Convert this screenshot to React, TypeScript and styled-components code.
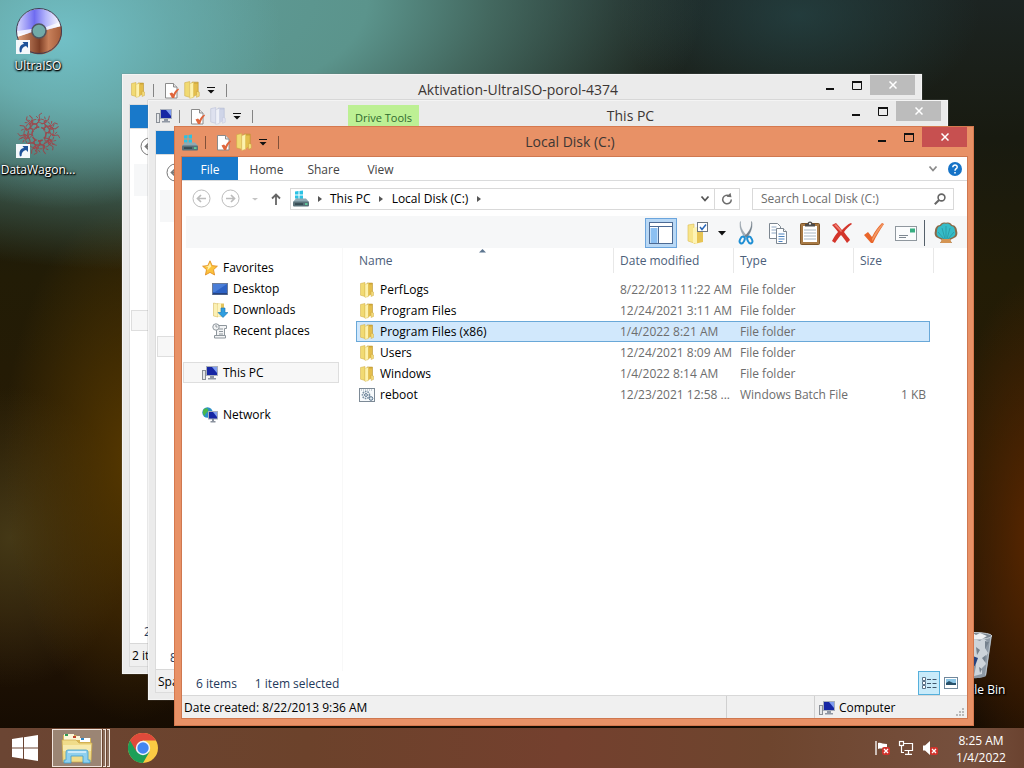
import React from "react";
import styled, { createGlobalStyle, css } from "styled-components";

const GlobalStyle = createGlobalStyle`
  * { box-sizing: border-box; }
  html, body { margin: 0; padding: 0; height: 100%; }
  body {
    font-family: "Open Sans", "Noto Sans", sans-serif;
    font-size: 12px;
    line-height: 16px;
    color: #000;
    overflow: hidden;
  }
  button, input { font: inherit; color: inherit; }
  button { border: 0; padding: 0; background: none; }
  a { color: inherit; text-decoration: none; }
  ul { list-style: none; margin: 0; padding: 0; }
  svg { display: block; flex: none; }
`;

/* ---------- Desktop ---------- */

const Screen = styled.div`
  display: flex;
  flex-direction: column;
  height: 100vh;
  background:
    radial-gradient(ellipse 220px 170px at 6% 5%, rgba(116, 196, 204, 0.9) 0%, rgba(108, 180, 184, 0.6) 50%, rgba(100, 160, 160, 0) 100%),
    radial-gradient(ellipse 560px 270px at 14% 0%, #5f9c98 0%, #5b948c 40%, rgba(74, 116, 106, 0.85) 62%, rgba(50, 66, 48, 0) 100%),
    radial-gradient(ellipse 180px 110px at 78% 2%, rgba(38, 70, 72, 0.7) 0%, rgba(36, 60, 60, 0) 100%),
    radial-gradient(ellipse 130px 260px at 13% 60%, #563800 0%, rgba(76, 48, 0, 0) 100%),
    radial-gradient(ellipse 120px 150px at 1% 70%, rgba(72, 60, 24, 0.9) 0%, rgba(66, 54, 18, 0) 100%),
    radial-gradient(ellipse 90px 260px at 101% 70%, #582600 0%, rgba(80, 34, 0, 0) 100%),
    linear-gradient(180deg, #1c2422 0%, #181a10 18%, #221c06 36%, #261a04 60%, #241505 80%, #160c02 95%);
`;

const Desktop = styled.main`
  position: relative;
  flex: 1;
  min-height: 0;
`;

const Shortcut = styled.button<{ $left?: number; $right?: number; $top: number }>`
  position: absolute;
  top: ${(p) => p.$top}px;
  ${(p) => (p.$left !== undefined ? `left: ${p.$left}px;` : "")}
  ${(p) => (p.$right !== undefined ? `right: ${p.$right}px;` : "")}
  width: 76px;
  display: flex;
  flex-direction: column;
  align-items: center;
  gap: 3px;
  color: #fff;
  white-space: nowrap;
  text-shadow: 1px 1px 1px #000, 0 0 3px #000, 0 1px 2px #000;
`;

/* ---------- Window frame ---------- */

const Frame = styled.section<{ $active?: boolean; $x: number; $y: number }>`
  position: absolute;
  left: ${(p) => p.$x}px;
  top: ${(p) => p.$y}px;
  right: ${(p) => 224 - p.$x}px;
  bottom: ${(p) => 128 - p.$y}px;
  display: flex;
  flex-direction: column;
  padding: 0 6px 7px 7px;
  background: ${(p) => (p.$active ? "#e89166" : "#ebebeb")};
  border: 1px solid ${(p) => (p.$active ? "#d5794f" : "#f4f4f4")};
  box-shadow: ${(p) => (p.$active ? "none" : "0 0 1px #777")};
`;

const TitleBar = styled.header`
  display: flex;
  flex: none;
  height: 30px;
`;

const QuickAccess = styled.div`
  display: flex;
  align-items: center;
  flex: none;
`;

const QuickButton = styled.button<{ $w: number }>`
  display: flex;
  align-items: center;
  justify-content: center;
  width: ${(p) => p.$w}px;
  height: 20px;
`;

const Rule = styled.span`
  width: 1px;
  height: 13px;
  margin: 0 7px;
  background: #00000070;
  flex: none;
`;

const ToolTab = styled.span`
  align-self: stretch;
  width: 71px;
  margin: 4px 0 0 88px;
  display: flex;
  align-items: center;
  justify-content: center;
  background: #bdf094;
  color: #2f6a2f;
  font-size: 11px;
  white-space: nowrap;
`;

const Title = styled.h1<{ $shift?: boolean }>`
  flex: 1;
  min-width: 0;
  margin: 0;
  padding-right: ${(p) => (p.$shift ? 14 : 0)}px;
  font-size: 14px;
  font-weight: 400;
  line-height: 30px;
  text-align: center;
  color: #3c3634;
  white-space: nowrap;
  overflow: hidden;
`;

const Controls = styled.div`
  display: flex;
  flex: none;
  align-items: flex-start;
`;

const ControlButton = styled.button<{ $w: number; $bg?: string }>`
  display: flex;
  align-items: center;
  justify-content: center;
  width: ${(p) => p.$w}px;
  height: 20px;
  background: ${(p) => p.$bg ?? "transparent"};
`;

const Client = styled.div<{ $active?: boolean }>`
  flex: 1;
  min-height: 0;
  display: flex;
  flex-direction: column;
  background: #fff;
  outline: 1px solid ${(p) => (p.$active ? "#cf7850" : "#dcdcdc")};
`;

/* ---------- Ribbon tabs ---------- */

const Tabs = styled.div`
  display: flex;
  flex: none;
  height: 24px;
  border-bottom: 1px solid #dadbdc;
`;

const Tab = styled.button<{ $file?: boolean }>`
  width: ${(p) => (p.$file ? 56 : 57)}px;
  height: 23px;
  padding-top: 2px;
  color: #444;
  ${(p) =>
    p.$file &&
    css`
      background: #1979ca;
      color: #fff;
    `}
`;

const TabsEnd = styled.div`
  display: flex;
  align-items: center;
  gap: 10px;
  margin-left: auto;
  padding-right: 5px;
`;

/* ---------- Address row ---------- */

const AddressRow = styled.div`
  display: flex;
  align-items: center;
  flex: none;
  height: 35px;
  padding: 0 13px 0 10px;
`;

const NavButton = styled.button<{ $w: number }>`
  display: flex;
  align-items: center;
  justify-content: center;
  flex: none;
  width: ${(p) => p.$w}px;
  height: 22px;
`;

const AddressBox = styled.nav`
  display: flex;
  align-items: center;
  flex: 1;
  min-width: 0;
  height: 22px;
  border: 1px solid #d9d9d9;
  padding-left: 2px;
`;

const Crumb = styled.a`
  white-space: nowrap;
`;

const CrumbArrow = styled.span`
  display: flex;
  justify-content: center;
  width: 21px;
`;

const AddressButton = styled.button<{ $line?: boolean }>`
  display: flex;
  align-items: center;
  justify-content: center;
  width: ${(p) => (p.$line ? 25 : 18)}px;
  height: 20px;
  margin-left: ${(p) => (p.$line ? "0" : "auto")};
  border-left: ${(p) => (p.$line ? "1px solid #d9d9d9" : "0")};
`;

const SearchBox = styled.label`
  display: flex;
  align-items: center;
  flex: none;
  width: 202px;
  height: 22px;
  margin-left: 12px;
  padding: 0 7px 0 8px;
  border: 1px solid #d9d9d9;
`;

const SearchInput = styled.input`
  flex: 1;
  min-width: 0;
  padding: 0;
  border: 0;
  outline: 0;
  background: transparent;
  &::placeholder { color: #6d6d6d; opacity: 1; }
`;

/* ---------- Toolbar ---------- */

const Toolbar = styled.div`
  display: flex;
  align-items: flex-end;
  justify-content: flex-end;
  flex: none;
  height: 32px;
  margin-left: 4px;
  padding-right: 5px;
  background: #f6f7f8;
`;

const ToolButton = styled.button<{ $on?: boolean; $narrow?: boolean }>`
  display: flex;
  align-items: center;
  justify-content: center;
  width: ${(p) => (p.$narrow ? 16 : 32)}px;
  height: 30px;
  ${(p) =>
    p.$on &&
    css`
      margin-right: 5px;
      background: #b9d8f5;
      border: 1px solid #6ba5dd;
    `}
`;

const ToolRule = styled.span`
  width: 1px;
  height: 26px;
  margin: 0 5px 2px 2px;
  background: #55606a;
`;

/* ---------- Panes ---------- */

const Panes = styled.div`
  display: flex;
  flex: 1;
  min-height: 0;
`;

const Sidebar = styled.nav`
  flex: none;
  width: 161px;
  padding: 9px 3px 0 1px;
  border-right: 1px solid #f8f8f8;
`;

const NavGroup = styled.ul`
  & + & { margin-top: 21px; }
`;

const NavItem = styled.a<{ $sub?: boolean; $current?: boolean }>`
  display: flex;
  align-items: center;
  gap: 5px;
  height: 21px;
  padding-left: ${(p) => (p.$sub ? 28 : 18)}px;
  border: 1px solid ${(p) => (p.$current ? "#dedede" : "transparent")};
  background: ${(p) => (p.$current ? "#f7f7f7" : "transparent")};
  white-space: nowrap;
`;

const Listing = styled.div`
  flex: 1;
  min-width: 0;
  padding-left: 13px;
`;

const FileTable = styled.table`
  width: 578px;
  table-layout: fixed;
  border-collapse: separate;
  border-spacing: 0;
`;

const HeadCell = styled.th<{ $w: number }>`
  width: ${(p) => p.$w}px;
  padding: 0 0 6px;
  font-weight: 400;
  text-align: left;
`;

const HeadLabel = styled.button<{ $first?: boolean }>`
  position: relative;
  display: flex;
  align-items: center;
  width: 100%;
  height: 25px;
  padding-left: ${(p) => (p.$first ? 3 : 6)}px;
  color: #4c607a;
  border-right: 1px solid #e8e8e8;
`;

const SortMark = styled.span`
  position: absolute;
  top: 0;
  left: calc(50% - 6px);
`;

const FileRow = styled.tr<{ $selected?: boolean }>`
  position: relative;
  z-index: 0;
  ${(p) =>
    p.$selected &&
    css`
      td:first-child::before {
        content: "";
        position: absolute;
        inset: 0 4px 0 0;
        z-index: -1;
        background: #d1e8fc;
        border: 1px solid #69a8d8;
      }
    `}
`;

const Cell = styled.td<{ $right?: boolean }>`
  height: 21px;
  padding: 0 ${(p) => (p.$right ? 8 : 0)}px 0 6px;
  color: #6d6d6d;
  text-align: ${(p) => (p.$right ? "right" : "left")};
  white-space: nowrap;
`;

const NameCell = styled(Cell)`
  padding-left: 3px;
  color: #000;
`;

const FileName = styled.span`
  display: flex;
  align-items: center;
  gap: 5px;
`;

/* ---------- Footer rows ---------- */

const InfoRow = styled.div`
  display: flex;
  align-items: center;
  flex: none;
  height: 24px;
  padding: 0 5px 0 14px;
  gap: 18px;
  color: #1e395b;
  white-space: nowrap;
`;

const InfoText = styled.span`
  padding-top: 2px;
`;

const ViewButtons = styled.div`
  display: flex;
  margin-left: auto;
`;

const ViewButton = styled.button<{ $on?: boolean }>`
  display: flex;
  align-items: center;
  justify-content: center;
  width: 22px;
  height: 24px;
  ${(p) =>
    p.$on &&
    css`
      background: #c9ebfa;
      border: 1px solid #56b0dc;
    `}
`;

const StatusBar = styled.footer`
  display: flex;
  flex: none;
  height: 23px;
  background: #f0f0f0;
  border-top: 1px solid #d8d8d8;
  white-space: nowrap;
`;

const StatusPart = styled.div<{ $w?: number }>`
  ${(p) => (p.$w ? `width: ${p.$w}px; flex: none; border-left: 1px solid #d0d0d0;` : "flex: 1; min-width: 0;")}
  display: flex;
  align-items: center;
  gap: 4px;
  padding-top: 1px;
  padding-left: ${(p) => (p.$w ? 4 : 2)}px;
`;

const Grip = styled.span`
  align-self: flex-end;
  margin: 0 2px 1px auto;
`;

/* ---------- Taskbar ---------- */

const Taskbar = styled.nav`
  position: relative;
  display: flex;
  align-items: center;
  flex: none;
  height: 40px;
  background: linear-gradient(90deg, #6b4533 0%, #6c422b 30%, #74402e 55%, #6e452e 75%, #76503e 95%, #6b4330 100%);
`;

const StartButton = styled.button`
  display: flex;
  align-items: center;
  justify-content: center;
  width: 50px;
  height: 40px;
`;

const TaskStack = styled.div`
  display: flex;
  gap: 1px;
  height: 38px;
  margin-left: 2px;
`;

const TaskButton = styled.button`
  display: flex;
  align-items: center;
  justify-content: center;
  width: 50px;
  height: 38px;
  border: 1px solid #efe3dc;
  background: #9b8574;
`;

const StackEdge = styled.span`
  width: 3px;
  border: 1px solid #efe3dc;
  border-left: 0;
  background: #8a6d5c;
`;

const PinnedButton = styled.button`
  display: flex;
  align-items: center;
  justify-content: center;
  width: 50px;
  height: 40px;
  margin-left: 8px;
`;

const Tray = styled.div`
  display: flex;
  align-items: center;
  gap: 8px;
  margin-left: auto;
`;

const TrayButton = styled.button`
  width: 16px;
  height: 16px;
`;

const Clock = styled.time`
  width: 70px;
  margin-right: 8px;
  padding-top: 2px;
  color: #fff;
  text-align: center;
  line-height: 17px;
`;

/* ---------- Icons ---------- */

const Folder = ({ faded = false, size = 16 }: { faded?: boolean; size?: number }) => (
  <svg width={size} height={size} viewBox="0 0 16 16" opacity={faded ? 0.9 : 1}>
    <path d="M8 1h5.500v10L8 14.500z" fill={faded ? "#c3cae2" : "#d3ab3a"} stroke={faded ? "#a9b2d0" : "#b8902a"} strokeWidth=".5" />
    <path d="M1.500 1.500L6 .5v14l-4.500-1.300z" fill={faded ? "#dde1f0" : "#f1da72"} stroke={faded ? "#b3bad6" : "#cfab42"} strokeWidth=".5" />
    <path d="M6 2.500l3.500-1.500v13.500L6 15.500z" fill={faded ? "#f0f2fa" : "#fdf2ae"} stroke={faded ? "#bcc3da" : "#d8ba50"} strokeWidth=".4" />
    <path d="M9.500 2.500H13v9l-3.500 2.500z" fill={faded ? "#ccd3e8" : "#e4be4c"} />
    <path d="M12 9l2.500 1v3.500L12 14.500z" fill={faded ? "#dfe2f2" : "#f3dc7c"} stroke={faded ? "#bcc2dc" : "#c79f34"} strokeWidth=".4" />
  </svg>
);

const PageCheck = () => (
  <svg width="16" height="17" viewBox="0 0 16 17">
    <path d="M2.500 1.500h8l3.500 3.500v11H2.500z" fill="#fff" stroke="#8b8b8b" />
    <path d="M10.500 1.500V5H14" fill="#e4e4e4" stroke="#8b8b8b" />
    <path d="M6.500 11.500l2.500-1 1.500 1.500c1-2.500 2.500-4.500 5-5.500l.5 1c-2.500 2.500-4 5.500-4.800 8.500H9z" fill="#e0663c" />
  </svg>
);

const Monitor = () => (
  <svg width="16" height="16" viewBox="0 0 16 16">
    <rect x=".5" y="5.500" width="3" height="9" fill="#e4e6e8" stroke="#8a8f96" />
    <rect x="4.500" y="1.500" width="11" height="9" fill="#1626a4" stroke="#a7aebb" />
    <path d="M10 2h5v6z" fill="#7f9df0" />
    <path d="M8 11h4v2h2v1.500H6V13h2z" fill="#9097a3" />
  </svg>
);

const Drive = () => (
  <svg width="16" height="17" viewBox="0 0 16 17">
    <path d="M2 1.500l3.500-.5v3.500H2zM6.500 1L10 .5v4H6.500zM2 5.500h3.500V9L2 8.500zM6.500 5.500H10v4L6.500 9z" fill="#2bc2e4" />
    <path d="M3 8.500h10l3 3.500H0z" fill="#8fa9b2" />
    <rect x="0" y="11.500" width="16" height="5" rx="1" fill="#587078" />
    <rect x="2" y="13.300" width="8" height="1.500" fill="#2f444b" />
    <rect x="12" y="13.300" width="2.500" height="1.500" fill="#5fe0a0" />
  </svg>
);

const Overflow = () => (
  <svg width="8" height="8" viewBox="0 0 8 8">
    <path d="M0 1h8v1H0zM.5 4h7L4 7.500z" fill="#111" />
  </svg>
);

const Back = ({ flip = false, dark = false }: { flip?: boolean; dark?: boolean }) => (
  <svg width="19" height="19" viewBox="0 0 19 19" fill="none" stroke={dark ? "#777" : "#bcbcbc"}>
    <circle cx="9.500" cy="9.500" r="8.500" />
    <path d={flip ? "M5 9.500h8.500M10 6l3.500 3.500L10 13" : "M14 9.500H5.500M9 6L5.500 9.500 9 13"} strokeWidth="1.700" />
  </svg>
);

const Star = () => (
  <svg width="16" height="16" viewBox="0 0 16 16">
    <path d="M8 .8l2.200 4.800 5.200.6-3.900 3.500 1.100 5.300L8 12.400 3.400 15l1.100-5.300L.6 6.200l5.200-.6z" fill="#fbc23c" stroke="#e08a1e" strokeWidth=".8" />
    <path d="M8 3l1.300 3.500-4 4L6 7 3 6.500l3.300-.4z" fill="#fff0a8" />
  </svg>
);

const DesktopIcon = () => (
  <svg width="16" height="16" viewBox="0 0 16 16">
    <rect x=".5" y="2.500" width="15" height="11" fill="#2d62c4" stroke="#6c7c98" />
    <path d="M1 3h14L3 11H1z" fill="#4a7ed8" />
    <rect x="1" y="12" width="14" height="1.500" fill="#27437e" />
  </svg>
);

const Downloads = () => (
  <svg width="16" height="16" viewBox="0 0 16 16">
    <path d="M5 1.500h7v13H5z" fill="#e3c45e" />
    <path d="M1.500 1L6 2v13l-4.500-1z" fill="#fbf0b4" stroke="#d1b04a" strokeWidth=".5" />
    <path d="M6 2l3-1v13l-3 1z" fill="#fdf5c0" />
    <path d="M9 6h4v4.500h3l-5 5-5-5h3z" fill="#2f9ee0" stroke="#1873b4" strokeWidth=".6" />
  </svg>
);

const Recent = () => (
  <svg width="16" height="16" viewBox="0 0 16 16" fill="#f3f4f5" stroke="#8e969c">
    <path d="M5.500 2.500h9v3h-2v9h-8v-8z" />
    <path d="M7 6h4M7 8.500h4M7 11h4M2.500 12.500h11v2.500h-11z" />
    <circle cx="4" cy="4" r="3.200" />
    <path d="M4 2v2h1.500" fill="none" />
  </svg>
);

const NetworkIcon = () => (
  <svg width="16" height="16" viewBox="0 0 16 16">
    <circle cx="5.500" cy="5.500" r="5.200" fill="#2b8fc8" />
    <path d="M2 2c3-2 5 0 4 2S3 6 3 9C1 8 0 5 2 2z" fill="#49b84a" />
    <rect x="6.500" y="4.500" width="9" height="7.500" fill="#1626a4" stroke="#a7aebb" />
    <path d="M11 5h4v5z" fill="#7f9df0" />
    <path d="M10 12h2v2h1.500v1.500h-5V14H10z" fill="#8a919d" />
  </svg>
);

const Batch = () => (
  <svg width="16" height="16" viewBox="0 0 16 16">
    <rect x=".5" y="1.500" width="15" height="13" fill="#f7fafc" stroke="#7d8a96" />
    <path d="M2 3h12" stroke="#9aa8b4" strokeDasharray="1 1" />
    <circle cx="7" cy="8" r="3.500" fill="none" stroke="#7a90a2" strokeWidth="1.600" strokeDasharray="1.600 .9" />
    <circle cx="7" cy="8" r="1.400" fill="#fff" stroke="#54708a" />
    <circle cx="12" cy="11.500" r="1.800" fill="#dfe8ee" stroke="#54708a" />
  </svg>
);

const LayoutIcon = () => (
  <svg width="24" height="22" viewBox="0 0 24 22">
    <rect x=".5" y=".5" width="23" height="21" fill="#fff" stroke="#4c6a94" />
    <path d="M1 4.500h22" stroke="#4c6a94" />
    <path d="M1.500 6h7v15h-7z" fill="#8cc0f2" />
    <path d="M9.500 5v16" stroke="#4c6a94" />
  </svg>
);

const FolderOptions = () => (
  <svg width="22" height="24" viewBox="0 0 22 24">
    <path d="M1 4l6-1v19l-6-2z" fill="#f8e58c" stroke="#dcbc50" strokeWidth=".6" />
    <path d="M6 8h10v13l-9 2z" fill="#e7c454" />
    <path d="M6 7l4-1v17l-4-1z" fill="#fdf3b4" />
    <rect x="10.500" y="1.500" width="10" height="9" fill="#fff" stroke="#6f7780" />
    <path d="M13 6l2 2.500L19 3.500" fill="none" stroke="#2b68b8" strokeWidth="1.500" />
  </svg>
);

const Scissors = () => (
  <svg width="16" height="24" viewBox="0 0 16 24">
    <path d="M2.500.5c-.8 5 2 10 6.500 14.500L7 16.500C3 11.500 1 5 2.500.5z" fill="#a4b0ba" stroke="#7d8b96" strokeWidth=".4" />
    <path d="M13.500.5c.8 5-2 10-6.500 14.500l2 1.500C13 11.500 15 5 13.500.5z" fill="#76848f" stroke="#5d6b76" strokeWidth=".4" />
    <ellipse cx="4.200" cy="19" rx="2.200" ry="3.600" fill="none" stroke="#1f8fd4" strokeWidth="2" transform="rotate(25 4.200 19)" />
    <ellipse cx="11.800" cy="19" rx="2.200" ry="3.600" fill="none" stroke="#1f8fd4" strokeWidth="2" transform="rotate(-25 11.800 19)" />
  </svg>
);

const Copy = () => (
  <svg width="20" height="23" viewBox="0 0 20 23" fill="#fff" stroke="#7d8791">
    <path d="M1.500 1.500h8l3 3v12h-11z" />
    <path d="M3.500 5h5M3.500 8h5M3.500 11h5" stroke="#8fa8c4" />
    <path d="M8.500 6.500h7l3 3v12h-10z" />
    <path d="M15.500 6.500v3h3" />
    <path d="M10.500 12h6M10.500 14.500h6M10.500 17h6M10.500 19.500h4" stroke="#4d82bd" />
  </svg>
);

const Paste = () => (
  <svg width="20" height="24" viewBox="0 0 20 24">
    <rect x=".5" y="2.500" width="19" height="21" rx="1" fill="#a87a45" stroke="#7c552a" />
    <rect x="3" y="5" width="14" height="16" fill="#fff" />
    <path d="M4 9h12M4 12h12M4 15h12M4 18h12" stroke="#a9b8c4" />
    <path d="M5 3h2.500a2.500 2.500 0 015 0H15v2.500H5z" fill="#4b4b4b" />
    <circle cx="10" cy="2.800" r="1" fill="#fff" />
  </svg>
);

const Delete = () => (
  <svg width="22" height="22" viewBox="0 0 22 22">
    <path d="M1 3l4-2c3 3 5 6 6 7 3-3 6-6 9-7l1 1c-3 2-6 5-8 8 2 3 5 6 6 8l-3 3c-2-3-4-6-6-8-2 2-4 5-6 8l-3-2c2-4 4-7 6-9C5 7 3 5 1 3z" fill="#d3352b" />
    <path d="M3 3l2-1 6 7-1 1z" fill="#f07d70" />
  </svg>
);

const BigCheck = () => (
  <svg width="22" height="22" viewBox="0 0 22 22">
    <path d="M1 13l4-3 4 5C12 9 15 5 19 1l2 1c-4 6-8 12-11 19H8z" fill="#e9662b" />
    <path d="M9 17c3-7 7-12 10-15l1.500.5C16 8 13 13 9.500 19z" fill="#f29a66" />
  </svg>
);

const Mail = () => (
  <svg width="22" height="15" viewBox="0 0 22 15">
    <rect x=".5" y=".5" width="21" height="14" fill="#fbfcfd" stroke="#8f979e" />
    <rect x="15" y="2.500" width="5" height="4" fill="#38ae82" />
    <path d="M4 9.500h9M4 11.500h7" stroke="#7d8791" />
  </svg>
);

const Shell = () => (
  <svg width="24" height="22" viewBox="0 0 24 22">
    <path d="M12 .8c3-1 5 .2 6 2.200 3 0 5 3 5 6 1 3 0 6-3 7l-4 2 2 3H6l2-3-4-2c-3-1-4-4-3-7 0-3 2-6 5-6C7 1 9-.2 12 .8z" fill="#8a6a48" />
    <path d="M12 2c2-1 4 0 5 2 3 0 4 3 4 5 1 3 0 5-2 6l-7 3-7-3c-2-1-3-3-2-6 0-2 1-5 4-5 1-2 3-3 5-2z" fill="#36bcc8" />
    <path d="M12 17V4M11 17L8 6M13 17l3-11M10 17L4 10M14 17l6-7" stroke="#25929c" strokeWidth=".7" fill="none" />
    <path d="M8 17h8l1.500 4h-11z" fill="#d49554" />
  </svg>
);

const Help = () => (
  <svg width="14" height="14" viewBox="0 0 14 14">
    <circle cx="7" cy="7" r="7" fill="#1673c7" />
    <path d="M4.800 5.300c0-3 4.600-2.800 4.400-.1C9.100 6.800 7 6.700 7 8.800M7 10v1.600" fill="none" stroke="#fff" strokeWidth="1.500" />
  </svg>
);

const ChevronDown = ({ color = "#777" }: { color?: string }) => (
  <svg width="10" height="8" viewBox="0 0 10 8">
    <path d="M1.500 1.500L5 5.500l3.500-4" fill="none" stroke={color} strokeWidth="1.800" />
  </svg>
);

const RightArrow = () => (
  <svg width="4" height="8" viewBox="0 0 4 8">
    <path d="M0 1l4 3-4 3z" fill="#555" />
  </svg>
);

const ShortcutArrow = () => (
  <g>
    <rect x="2" y="33" width="14" height="14" fill="#f4f8fb" />
    <path d="M6 45.500c-1.500-5 .5-8 4-8.500L8.500 35H14v6l-2-2c-3 .5-4.500 3-4.500 6z" fill="#1d5299" />
  </g>
);

const UltraDisc = () => (
  <svg width="48" height="48" viewBox="0 0 48 48">
    <defs>
      <linearGradient id="discTop" x1="0" y1="0" x2="1" y2="0">
        <stop offset="0" stopColor="#d8d8ff" />
        <stop offset=".4" stopColor="#6f6cf0" />
        <stop offset=".65" stopColor="#b3b4fb" />
        <stop offset="1" stopColor="#fff" />
      </linearGradient>
      <linearGradient id="discLow" x1="0" y1="0" x2="1" y2="0">
        <stop offset="0" stopColor="#e2a27c" />
        <stop offset=".5" stopColor="#7e3f26" />
        <stop offset=".7" stopColor="#c7805a" />
        <stop offset="1" stopColor="#a35a38" />
      </linearGradient>
    </defs>
    <circle cx="25" cy="24" r="22.500" fill="#f4f6ff" />
    <path d="M2.800 27A22.500 22.500 0 0147.200 20L32 23 18 26z" fill="url(#discTop)" />
    <path d="M3 30l15-5 14-2 15.400-4A22.500 22.500 0 013 30z" fill="url(#discLow)" />
    <path d="M3 24l15-2v3L3 30z" fill="#fff" opacity=".8" />
    <path d="M32 20l14-5 1 4-15 4z" fill="#fff" opacity=".7" />
    <circle cx="25" cy="24" r="22.500" fill="none" stroke="#3d3b52" />
    <circle cx="25" cy="24" r="7" fill="#71aaa8" stroke="#4f5560" strokeWidth="1.500" />
    <ShortcutArrow />
  </svg>
);

const spokes = Array.from({ length: 16 }, (_, i) => i * 22 + (i % 3) * 5);

const DataWagonIcon = () => (
  <svg width="48" height="48" viewBox="0 0 48 48">
    <g fill="none" stroke="#a8383e" strokeWidth=".9" opacity=".8">
      {spokes.map((a, i) => (
        <g key={a} transform={`rotate(${a} 25 23)`}>
          <path d={i % 2 ? "M25 17l3-3-4-4 3-4-1-4" : "M25 17l-3-4 4-4-1-5 3-2"} />
          <path d="M22 13l3-2 4 2M27 8l3 1M22 5l2 2" />
          <circle cx="25" cy="9" r="1" fill="#c5454b" />
        </g>
      ))}
      <circle cx="25" cy="23" r="7" strokeWidth="1.500" strokeDasharray="5 2" />
    </g>
    <ShortcutArrow />
  </svg>
);

const RecycleBin = () => (
  <svg width="40" height="48" viewBox="0 0 40 48">
    <path d="M2 4h36l-6 41c-4 3-20 3-24 0z" fill="#8d99a5" />
    <path d="M20 8l6 2 3-3 5 4-3 6 3 5-4 6 2 5-4 4v6l-8 2 2-10-5-8z" fill="#cdd4da" />
    <path d="M31 10l4 1-4 7zM28 27l4-3-1 7zM22 16l4 3-3 5zM25 36l3 2-2 4z" fill="#75818d" />
    <path d="M16 24l8 3-3 8-7-3z" fill="#27437e" />
    <ellipse cx="20" cy="5" rx="18" ry="3.500" fill="#7d8893" stroke="#c9d0d6" />
    <path d="M12 5l5-4 5 3 4-2 7 3-5 3H18z" fill="#eef1f3" />
    <path d="M37 5l-5.500 39" stroke="#b9c2c9" fill="none" />
  </svg>
);

const StartLogo = () => (
  <svg width="26" height="26" viewBox="0 0 26 26">
    <path d="M0 4l11-1.700v10.200H0zM12 2.200L26 0v12.500H12zM0 13.500h11v10.200L0 22zM12 13.500h14V26l-14-2.200z" fill="#fff" />
  </svg>
);

const ExplorerLogo = () => (
  <svg width="34" height="32" viewBox="0 0 34 32">
    <path d="M3 3h13l2 3h13v8H3z" fill="#d8b656" />
    <path d="M4 2h10v6H4z" fill="#fbf6d6" />
    <rect x="5" y="2" width="3" height="2" fill="#2f9b54" />
    <path d="M12 4h8v4h-8z" fill="#fbf6d6" />
    <rect x="13" y="4" width="3" height="2" fill="#c0462e" />
    <path d="M20 6h10v4H20z" fill="#fff" />
    <rect x="21" y="6" width="3" height="2" fill="#2f88c8" />
    <path d="M2 8h14l3 3h13l-1 19H3z" fill="#f0dc8a" stroke="#cda94a" strokeWidth=".7" />
    <path d="M3 13h28v6H3z" fill="#f7eaae" />
    <path d="M6 20q0-2 2-2h18q2 0 2 2v8h2v3h-7v-7H11v7H4v-3h2z" fill="#8fd0ee" stroke="#3d9ccc" strokeWidth=".8" />
    <path d="M8 20h18" stroke="#dff3fc" strokeWidth="1.500" />
  </svg>
);

const ChromeLogo = () => (
  <svg width="30" height="30" viewBox="0 0 30 30">
    <circle cx="15" cy="15" r="15" fill="#fbcb43" />
    <path d="M2 7.500A15 15 0 0015 30l6.500-11.200L15 15z" fill="#1d9f57" />
    <path d="M2 7.500L8.500 18.800 15 7.500h13A15 15 0 002 7.500z" fill="#df4a3b" />
    <circle cx="15" cy="15" r="7.200" fill="#f3f5f8" />
    <circle cx="15" cy="15" r="5.700" fill="#4386f2" />
  </svg>
);

const RedCross = () => (
  <g>
    <rect x="8" y="7" width="8" height="8" rx="2" fill="#d1332c" />
    <path d="M10 9l4 4M14 9l-4 4" stroke="#fff" strokeWidth="1.300" />
  </g>
);

const FlagIcon = () => (
  <svg width="16" height="16" viewBox="0 0 16 16">
    <path d="M2 1v14" stroke="#fff" strokeWidth="1.300" />
    <path d="M4 3c3-1 4 1 9 1v5c-4 0-6-1-9 0z" fill="#fff" />
    <RedCross />
  </svg>
);

const WiredIcon = () => (
  <svg width="16" height="16" viewBox="0 0 16 16" fill="none" stroke="#fff" strokeWidth="1.200">
    <path d="M5.500 3.500h9v7h-8M10.500 11v3M7 14.400h7" />
    <rect x="1.500" y="1.500" width="4" height="4" />
    <path d="M3.500 6v6.500H6" />
  </svg>
);

const SoundIcon = () => (
  <svg width="16" height="16" viewBox="0 0 16 16">
    <path d="M1 5.500h2l5-4.500v14l-5-4.500H1z" fill="#fff" />
    <RedCross />
  </svg>
);

/* ---------- Window parts ---------- */

type WindowProps = {
  title: string;
  x: number;
  y: number;
  active?: boolean;
  icon: React.ReactNode;
  toolTab?: string;
  fadedFolder?: boolean;
  children: React.ReactNode;
};

const ExplorerWindow = ({ title, x, y, active, icon, toolTab, fadedFolder, children }: WindowProps) => (
  <Frame $active={active} $x={x} $y={y} aria-label={title}>
    <TitleBar>
      <QuickAccess>
        {icon}
        <Rule />
        <QuickButton $w={20} aria-label="Properties"><PageCheck /></QuickButton>
        <QuickButton $w={22} aria-label="New folder"><Folder faded={fadedFolder} size={18} /></QuickButton>
        <QuickButton $w={16} aria-label="Customize toolbar"><Overflow /></QuickButton>
        <Rule />
      </QuickAccess>
      {toolTab && <ToolTab>{toolTab}</ToolTab>}
      <Title $shift={!toolTab}>{title}</Title>
      <Controls>
        <ControlButton $w={28} aria-label="Minimize">
          <svg width="8" height="14" viewBox="0 0 8 14"><path d="M0 10h8v2H0z" fill="#111" /></svg>
        </ControlButton>
        <ControlButton $w={26} aria-label="Maximize">
          <svg width="10" height="9" viewBox="0 0 10 9"><path d="M.5 1v7.500h9V1" fill="none" stroke="#111" /><path d="M0 0h10v2H0z" fill="#111" /></svg>
        </ControlButton>
        <ControlButton $w={45} $bg={active ? "#c75050" : "#bcbcbc"} aria-label="Close">
          <svg width="8" height="8" viewBox="0 0 8 8"><path d="M.5.5l7 7M7.500.5l-7 7" stroke="#fff" strokeWidth="1.500" /></svg>
        </ControlButton>
      </Controls>
    </TitleBar>
    <Client $active={active}>{children}</Client>
  </Frame>
);

type BackProps = { items: string; status: string };

const BackgroundContent = ({ items, status }: BackProps) => (
  <>
    <Tabs><Tab $file aria-label="File" /></Tabs>
    <AddressRow><NavButton $w={19} aria-label="Back"><Back dark /></NavButton></AddressRow>
    <Toolbar />
    <Panes>
      <Sidebar>
        <NavGroup><li><NavItem /></li><li><NavItem /></li><li><NavItem /></li><li><NavItem /></li></NavGroup>
        <NavGroup><li><NavItem $current /></li></NavGroup>
      </Sidebar>
    </Panes>
    <InfoRow><InfoText>{items}</InfoText></InfoRow>
    <StatusBar><StatusPart>{status}</StatusPart></StatusBar>
  </>
);

const favorites = [
  { label: "Desktop", icon: <DesktopIcon /> },
  { label: "Downloads", icon: <Downloads /> },
  { label: "Recent places", icon: <Recent /> },
];

const files = [
  { name: "PerfLogs", date: "8/22/2013 11:22 AM", type: "File folder", size: "" },
  { name: "Program Files", date: "12/24/2021 3:11 AM", type: "File folder", size: "" },
  { name: "Program Files (x86)", date: "1/4/2022 8:21 AM", type: "File folder", size: "", selected: true },
  { name: "Users", date: "12/24/2021 8:09 AM", type: "File folder", size: "" },
  { name: "Windows", date: "1/4/2022 8:14 AM", type: "File folder", size: "" },
  { name: "reboot", date: "12/23/2021 12:58 ...", type: "Windows Batch File", size: "1 KB" },
];

const tools = [
  { label: "Cut", icon: <Scissors /> },
  { label: "Copy", icon: <Copy /> },
  { label: "Paste", icon: <Paste /> },
  { label: "Delete", icon: <Delete /> },
  { label: "Properties", icon: <BigCheck /> },
  { label: "E-mail", icon: <Mail /> },
];

const LocalDisk = () => (
  <>
    <Tabs>
      <Tab $file>File</Tab>
      <Tab>Home</Tab>
      <Tab>Share</Tab>
      <Tab>View</Tab>
      <TabsEnd>
        <button aria-label="Expand ribbon"><ChevronDown color="#8a8a8a" /></button>
        <button aria-label="Help"><Help /></button>
      </TabsEnd>
    </Tabs>
    <AddressRow>
      <NavButton $w={19} aria-label="Back"><Back /></NavButton>
      <NavButton $w={39} aria-label="Forward"><Back flip /></NavButton>
      <NavButton $w={10} aria-label="Recent locations">
        <svg width="6" height="4" viewBox="0 0 6 4"><path d="M0 1h6L3 3.500z" fill="#c4c4c4" /></svg>
      </NavButton>
      <NavButton $w={30} aria-label="Up">
        <svg width="12" height="12" viewBox="0 0 12 12"><path d="M7 12V2M3 5.500L7 1.500l4 4" fill="none" stroke="#666" strokeWidth="1.800" /></svg>
      </NavButton>
      <AddressBox aria-label="Address">
        <Drive />
        <CrumbArrow><RightArrow /></CrumbArrow>
        <Crumb href="#pc">This PC</Crumb>
        <CrumbArrow><RightArrow /></CrumbArrow>
        <Crumb href="#c">Local Disk (C:)</Crumb>
        <CrumbArrow><RightArrow /></CrumbArrow>
        <AddressButton aria-label="Previous locations"><ChevronDown color="#555" /></AddressButton>
        <AddressButton $line aria-label="Refresh">
          <svg width="12" height="12" viewBox="0 0 12 12"><path d="M8.500 3A4.300 4.300 0 1010.300 6.500" fill="none" stroke="#6d6d6d" strokeWidth="1.500" /><path d="M5.500 3.800l5 .5-1-4.500z" fill="#6d6d6d" /></svg>
        </AddressButton>
      </AddressBox>
      <SearchBox>
        <SearchInput type="text" placeholder="Search Local Disk (C:)" aria-label="Search Local Disk (C:)" />
        <svg width="12" height="12" viewBox="0 0 12 12" fill="none" stroke="#666"><circle cx="7.500" cy="4.500" r="3.400" strokeWidth="1.600" /><path d="M5 7L.8 11.200" strokeWidth="2" /></svg>
      </SearchBox>
    </AddressRow>
    <Toolbar>
      <ToolButton $on aria-label="Navigation pane"><LayoutIcon /></ToolButton>
      <ToolButton aria-label="Folder options"><FolderOptions /></ToolButton>
      <ToolButton $narrow aria-label="More options">
        <svg width="8" height="5" viewBox="0 0 8 5"><path d="M0 0h8L4 4.500z" fill="#111" /></svg>
      </ToolButton>
      {tools.map((t) => (
        <ToolButton key={t.label} aria-label={t.label}>{t.icon}</ToolButton>
      ))}
      <ToolRule />
      <ToolButton aria-label="Classic shell"><Shell /></ToolButton>
    </Toolbar>
    <Panes>
      <Sidebar aria-label="Places">
        <NavGroup>
          <li><NavItem href="#favorites"><Star />Favorites</NavItem></li>
          {favorites.map((f) => (
            <li key={f.label}><NavItem href="#place" $sub>{f.icon}{f.label}</NavItem></li>
          ))}
        </NavGroup>
        <NavGroup><li><NavItem href="#pc" $current><Monitor />This PC</NavItem></li></NavGroup>
        <NavGroup><li><NavItem href="#network"><NetworkIcon />Network</NavItem></li></NavGroup>
      </Sidebar>
      <Listing>
        <FileTable>
          <thead>
            <tr>
              <HeadCell $w={258}>
                <HeadLabel $first>Name
                  <SortMark><svg width="7" height="5" viewBox="0 0 7 5"><path d="M0 4.500L3.500 1 7 4.500z" fill="#5d7690" /></svg></SortMark>
                </HeadLabel>
              </HeadCell>
              <HeadCell $w={120}><HeadLabel>Date modified</HeadLabel></HeadCell>
              <HeadCell $w={120}><HeadLabel>Type</HeadLabel></HeadCell>
              <HeadCell $w={80}><HeadLabel>Size</HeadLabel></HeadCell>
            </tr>
          </thead>
          <tbody>
            {files.map((f) => (
              <FileRow key={f.name} $selected={f.selected}>
                <NameCell><FileName>{f.name === "reboot" ? <Batch /> : <Folder />}{f.name}</FileName></NameCell>
                <Cell>{f.date}</Cell>
                <Cell>{f.type}</Cell>
                <Cell $right>{f.size}</Cell>
              </FileRow>
            ))}
          </tbody>
        </FileTable>
      </Listing>
    </Panes>
    <InfoRow>
      <InfoText>6 items</InfoText>
      <InfoText>1 item selected</InfoText>
      <ViewButtons>
        <ViewButton aria-label="Details view" $on>
          <svg width="16" height="14" viewBox="0 0 16 14" fill="none">
            <path d="M1.500 1.500h3v3h-3zM1.500 5.500h3v3h-3zM1.500 9.500h3v3h-3z" fill="#fff" stroke="#5b7186" />
            <path d="M6 3.500h4M6 7.500h4M6 11.500h4M11.500 3.500h4M11.500 7.500h4M11.500 11.500h4" stroke="#41566b" />
          </svg>
        </ViewButton>
        <ViewButton aria-label="Thumbnails">
          <svg width="14" height="12" viewBox="0 0 14 12">
            <rect x=".5" y=".5" width="13" height="11" fill="#fff" stroke="#71889c" />
            <rect x="2" y="2" width="10" height="6" fill="#8cc6e6" />
            <path d="M2 8V6l3-2 4 2h3v2z" fill="#28516a" />
          </svg>
        </ViewButton>
      </ViewButtons>
    </InfoRow>
    <StatusBar>
      <StatusPart>Date created: 8/22/2013 9:36 AM</StatusPart>
      <StatusPart $w={88} />
      <StatusPart $w={153}>
        <Monitor />Computer
        <Grip>
          <svg width="10" height="10" viewBox="0 0 10 10"><path d="M7 1h2v2H7zM7 4h2v2H7zM4 4h2v2H4zM7 7h2v2H7zM4 7h2v2H4zM1 7h2v2H1z" fill="#b9b9b9" /></svg>
        </Grip>
      </StatusPart>
    </StatusBar>
  </>
);

export default function App() {
  return (
    <>
      <GlobalStyle />
      <Screen>
        <Desktop>
          <Shortcut $left={0} $top={7}><UltraDisc />UltraISO</Shortcut>
          <Shortcut $left={0} $top={111}><DataWagonIcon />DataWagon...</Shortcut>
          <Shortcut $right={12} $top={631}><RecycleBin />Recycle Bin</Shortcut>
          <ExplorerWindow title="Aktivation-UltraISO-porol-4374" x={122} y={74} icon={<Folder />}>
            <BackgroundContent items="2 items" status="2 items" />
          </ExplorerWindow>
          <ExplorerWindow title="This PC" x={148} y={100} icon={<Monitor />} toolTab="Drive Tools" fadedFolder>
            <BackgroundContent items="8 items" status="Space" />
          </ExplorerWindow>
          <ExplorerWindow title="Local Disk (C:)" x={174} y={126} active icon={<Drive />}>
            <LocalDisk />
          </ExplorerWindow>
        </Desktop>
        <Taskbar aria-label="Taskbar">
          <StartButton aria-label="Start"><StartLogo /></StartButton>
          <TaskStack>
            <TaskButton aria-label="File Explorer"><ExplorerLogo /></TaskButton>
            <StackEdge />
            <StackEdge />
          </TaskStack>
          <PinnedButton aria-label="Google Chrome"><ChromeLogo /></PinnedButton>
          <Tray>
            <TrayButton aria-label="Action Center"><FlagIcon /></TrayButton>
            <TrayButton aria-label="Network"><WiredIcon /></TrayButton>
            <TrayButton aria-label="Volume"><SoundIcon /></TrayButton>
            <Clock>8:25 AM<br />1/4/2022</Clock>
          </Tray>
        </Taskbar>
      </Screen>
    </>
  );
}
